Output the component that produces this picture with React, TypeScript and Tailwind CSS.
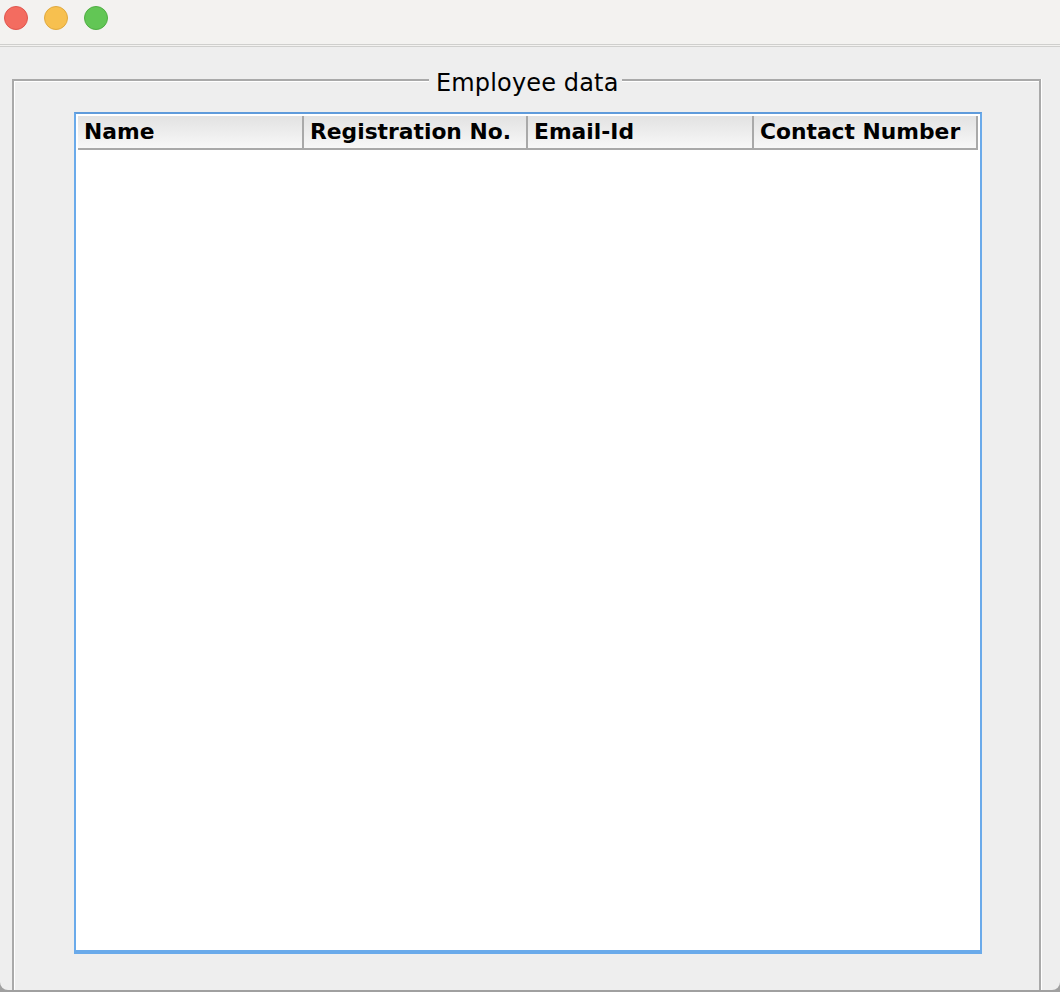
const columns = [
  { title: 'Name', width: 'w-[226px]' },
  { title: 'Registration No.', width: 'w-[224px]' },
  { title: 'Email-Id', width: 'w-[226px]' },
  { title: 'Contact Number', width: 'w-[224px]' },
];

export default function App() {
  return (
    <div className="h-[992px] w-[1060px] overflow-hidden bg-[#a0a0a0] text-black font-['DejaVu_Sans',sans-serif]">
      <div className="h-[990px] overflow-hidden rounded-b-[8px] bg-[#eeeeee]">
        {/* title bar */}
        <div className="flex h-[47px] items-start gap-[16px] border-b-[3px] border-double border-[#cfcfcd] bg-[#f3f2f0] pl-[4px] pt-[6px]">
          <div className="h-[24px] w-[24px] rounded-full border border-[#e0564e] bg-[#f36c60]" />
          <div className="h-[24px] w-[24px] rounded-full border border-[#e0a93e] bg-[#f7c04f]" />
          <div className="h-[24px] w-[24px] rounded-full border border-[#4fae43] bg-[#62c655]" />
        </div>

        {/* titled border */}
        <div className="px-[12px] pt-[32px]">
          <div className="relative h-[911px] w-[1029px] border-2 border-b-0 border-[#a9a9a9] pl-[60px] pt-[31px] shadow-[inset_1px_1px_0_#ffffff,1px_0_0_#ffffff]">
            <span className="absolute left-[415px] top-[-12px] bg-[#eeeeee] pl-[7px] pr-[3px] text-[24px] leading-[28px] tracking-[0.15px]">
              Employee data
            </span>

            {/* table */}
            <div className="h-[842px] w-[908px] border-2 border-b-4 border-[#6aaaea] border-t-[#5f9bdb] bg-white p-[2px]">
              <div className="flex h-[34px] w-[900px] border-b-2 border-[#a9a9a9] bg-gradient-to-b from-[#e2e2e2] to-[#f8f8f8]">
                {columns.map((col) => (
                  <div
                    key={col.title}
                    className={`${col.width} shrink-0 border-r-2 border-[#a9a9a9] pl-[6px] text-[21.8px] font-bold leading-[31px] whitespace-nowrap`}
                  >
                    {col.title}
                  </div>
                ))}
              </div>
            </div>
          </div>
        </div>
      </div>
    </div>
  );
}
